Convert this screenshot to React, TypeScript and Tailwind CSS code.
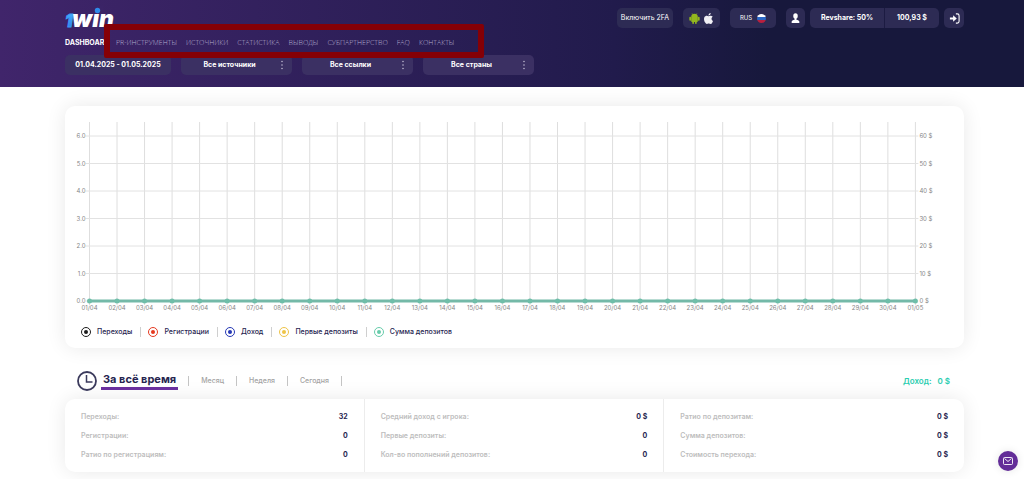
import { useState } from "react";

const font = "font-['Inter','Open_Sans',sans-serif]";

const navItems = [
  "PR-ИНСТРУМЕНТЫ",
  "ИСТОЧНИКИ",
  "СТАТИСТИКА",
  "ВЫВОДЫ",
  "СУБПАРТНЕРСТВО",
  "FAQ",
  "КОНТАКТЫ",
];

const filters = [
  { label: "Источники", value: "Все источники" },
  { label: "Ссылки", value: "Все ссылки" },
  { label: "Страны", value: "Все страны" },
];

const series = [
  { name: "Переходы", ring: "border-[#1c1c1c] text-[#1c1c1c]" },
  { name: "Регистрации", ring: "border-[#e5391f] text-[#e5391f]" },
  { name: "Доход", ring: "border-[#2437b4] text-[#2437b4]" },
  { name: "Первые депозиты", ring: "border-[#eec447] text-[#eec447]" },
  { name: "Сумма депозитов", ring: "border-[#67ccab] text-[#67ccab]" },
];

const periods = ["Месяц", "Неделя", "Сегодня"];

const stats = [
  [
    ["Переходы:", "32"],
    ["Регистрации:", "0"],
    ["Ратио по регистрациям:", "0"],
  ],
  [
    ["Средний доход с игрока:", "0 $"],
    ["Первые депозиты:", "0"],
    ["Кол-во пополнений депозитов:", "0"],
  ],
  [
    ["Ратио по депозитам:", "0 $"],
    ["Сумма депозитов:", "0 $"],
    ["Стоимость перехода:", "0 $"],
  ],
];

const days = Array.from({ length: 31 }, (_, i) =>
  i < 30 ? `${String(i + 1).padStart(2, "0")}/04` : "01/05",
);

const pill = "flex h-5 items-center justify-center rounded-[5px] bg-[#2d2b54]";

function Logo() {
  return (
    <svg viewBox="0 0 54 30" className="h-[30px] w-[54px]" role="img" aria-label="1win">
      <defs>
        <linearGradient id="one" x1="0" y1="0" x2="0" y2="1">
          <stop offset="0" stopColor="#45b4ff" />
          <stop offset="1" stopColor="#2a78e6" />
        </linearGradient>
      </defs>
      <g fontFamily="Inter, sans-serif" fontWeight="900" fontStyle="italic">
        <text x="0" y="24" fontSize="17" fill="url(#one)" stroke="#3a9df5" strokeWidth=".8">1</text>
        <text x="7" y="24" fontSize="23" fill="#fff">win</text>
      </g>
      <rect x="29" y="3" width="9" height="6.800" fill="#3b2467" />
      <circle cx="32.500" cy="7.500" r="2.700" fill="#2f8bea" />
    </svg>
  );
}

function AndroidIcon() {
  return (
    <svg viewBox="0 0 20 20" className="size-[11px]" fill="#93b81e" aria-hidden="true">
      <path d="M4 7.400a6 6 0 0 1 12 0z" />
      <path d="M4 7.200h12V15a1.500 1.500 0 0 1-1.500 1.500h-9A1.500 1.500 0 0 1 4 15z" />
      <rect x=".6" y="7" width="3.200" height="7" rx="1.500" />
      <rect x="16.200" y="7" width="3.200" height="7" rx="1.500" />
      <rect x="6" y="14" width="3" height="6" rx="1.500" />
      <rect x="11" y="14" width="3" height="6" rx="1.500" />
      <path d="M5.500.5 7 3M14.500.5 13 3" stroke="#93b81e" />
    </svg>
  );
}

function AppleIcon() {
  return (
    <svg viewBox="0 0 24 24" className="size-[11px]" fill="#f1f0f5" aria-hidden="true">
      <path d="M12.152 6.896c-.948 0-2.415-1.078-3.960-1.040-2.040.027-3.910 1.183-4.961 3.014-2.117 3.675-.546 9.103 1.519 12.090 1.013 1.454 2.208 3.090 3.792 3.039 1.520-.065 2.090-.987 3.935-.987 1.831 0 2.350.987 3.960.948 1.637-.026 2.676-1.480 3.676-2.948 1.156-1.688 1.636-3.325 1.662-3.415-.039-.013-3.182-1.221-3.220-4.857-.026-3.040 2.480-4.494 2.597-4.559-1.429-2.090-3.623-2.324-4.390-2.376-2-.156-3.675 1.090-4.610 1.090zM15.530 3.830c.843-1.012 1.400-2.427 1.245-3.830-1.207.052-2.662.805-3.532 1.818-.780.896-1.454 2.338-1.273 3.714 1.338.104 2.715-.688 3.559-1.701" />
    </svg>
  );
}

function FlagIcon() {
  return (
    <svg viewBox="0 0 9 9" className="size-[9px] rounded-full" aria-hidden="true">
      <rect width="9" height="3" fill="#fff" />
      <rect y="3" width="9" height="3" fill="#2a66c4" />
      <rect y="6" width="9" height="3" fill="#b8203f" />
    </svg>
  );
}

function UserIcon() {
  return (
    <svg viewBox="0 0 10 12" className="h-[10px] w-[9px]" fill="#fff" aria-hidden="true">
      <ellipse cx="5" cy="3.500" rx="2.700" ry="3.300" />
      <path d="M3.900 6h2.200v2.200c2 .3 3.500 1 3.500 2.300V12H.4v-1.500c0-1.300 1.500-2 3.500-2.300z" />
    </svg>
  );
}

function ExitIcon() {
  return (
    <svg viewBox="0 0 12 12" className="size-[11px]" aria-hidden="true">
      <path d="M7.500 1H9a2 2 0 0 1 2 2v6a2 2 0 0 1-2 2H7.500" fill="none" stroke="#fff" strokeWidth="1.200" />
      <path d="M1 5h3.500V2.500L8.500 6l-4 3.500V7H1z" fill="#fff" />
    </svg>
  );
}

function Chart() {
  const x0 = 24.5;
  const y0 = 181;
  const stepX = 27.53;
  const stepY = 27.5;
  const x1 = x0 + 30 * stepX;
  return (
    <svg viewBox="0 0 899 196" className="block h-auto w-full" role="img" aria-label="Статистика по дням" fontFamily="Inter, sans-serif" fontSize="6" fill="#858585">
      {days.map((d, i) => (
        <g key={d}>
          <line x1={x0 + i * stepX} x2={x0 + i * stepX} y1="2" y2={y0 + 4} stroke="#dedede" />
          <text x={x0 + i * stepX} y="190" textAnchor="middle">{d}</text>
        </g>
      ))}
      {[0, 1, 2, 3, 4, 5, 6].map((n) => (
        <g key={n}>
          <line x1={x0 - 4} x2={x1 + 3} y1={y0 - n * stepY} y2={y0 - n * stepY} stroke="#e2e2e2" />
          <text x={x0 - 4} y={y0 + 2 - n * stepY} textAnchor="end">{n}.0</text>
          <text x={x1 + 4} y={y0 + 2 - n * stepY}>{n * 10} $</text>
        </g>
      ))}
      <line x1={x0} x2={x1} y1={y0} y2={y0} stroke="#74b9a8" strokeWidth="3" />
      {days.map((d, i) => (
        <circle key={d} cx={x0 + i * stepX} cy={y0} r="2.500" fill="#6fbea9" />
      ))}
    </svg>
  );
}

export default function App() {
  const [period, setPeriod] = useState("За всё время");
  return (
    <div className={`${font} min-h-screen bg-white text-[#26244f]`}>
      <header className="bg-linear-to-r from-[#40256b] via-[#211b4c] via-60% to-[#17183c] to-75% pt-2 pr-[60px] pb-3 pl-[65px] text-white">
        <div className="flex h-5 items-center justify-between">
          <a href="#"><Logo /></a>
          <div className="flex text-[7px] leading-5">
            <button className={`${pill} w-14`}>Включить 2FA</button>
            <div className={`${pill} ml-[10px] w-[37px] gap-[3px]`}>
              <a href="#" aria-label="Android"><AndroidIcon /></a>
              <a href="#" aria-label="iOS"><AppleIcon /></a>
            </div>
            <button className={`${pill} ml-[10px] w-[46px] gap-[5px] text-[6px]`}>RUS <FlagIcon /></button>
            <button aria-label="Профиль" className={`${pill} ml-[10px] w-[19px]`}><UserIcon /></button>
            <div className={`${pill} ml-[5px] font-bold`}>
              <span className="w-[75px] border-r border-[#1c1b42] text-center">Revshare: 50%</span>
              <span className="w-[54px] text-center">100,93 $</span>
            </div>
            <button aria-label="Выйти" className={`${pill} ml-[5px] w-5`}><ExitIcon /></button>
          </div>
        </div>
        <nav className="relative mt-[10px] flex h-[10px] items-center text-[7px] whitespace-nowrap">
          <a href="#" className="w-[51px] font-bold">DASHBOARD</a>
          <div className="flex gap-[9px] font-['Open_Sans'] font-light text-[#b4adcf]">
            {navItems.map((item) => (
              <a key={item} href="#">{item}</a>
            ))}
          </div>
          <div className="pointer-events-none absolute -top-[14px] left-[39px] z-10 h-[34px] w-[380px] rounded-[2px] border-[6px] border-[#850006]" />
        </nav>
        <div className="mt-[7px] flex gap-[10px] text-[7px] font-bold">
          <button className="h-5 w-[106px] rounded-[5px] bg-[#3b3063]">01.04.2025 - 01.05.2025</button>
          {filters.map((f) => (
            <div key={f.label} className="relative h-5 w-[111px]">
              <select aria-label={f.label} className="h-5 w-full appearance-none rounded-[5px] bg-[#3b3063] pr-[14px] text-center">
                <option>{f.value}</option>
              </select>
              <svg viewBox="0 0 2 10" className="pointer-events-none absolute top-[5px] right-[9px] h-[10px] w-[2px]" fill="#d5d0e3" aria-hidden="true">
                <circle cx="1" cy="1.500" r=".7" />
                <circle cx="1" cy="5" r=".7" />
                <circle cx="1" cy="8.500" r=".7" />
              </svg>
            </div>
          ))}
        </div>
      </header>

      <main className="pt-[19px] pr-[60px] pb-[7px] pl-[65px]">
        <section className="rounded-[10px] bg-white pt-[14px] pb-[10px] shadow-[0_0_20px_rgba(0,0,0,0.09)]">
          <Chart />
          <div className="mt-[10px] flex h-3 items-center pl-4 text-[7px] leading-[10px] font-medium">
            {series.map((s, i) => (
              <label key={s.name} className={i ? "ml-2 flex items-center gap-[6px] border-l border-[#cfcfcf] pl-[7px]" : "flex items-center gap-[6px]"}>
                <input
                  type="checkbox"
                  defaultChecked
                  className={`${s.ring} grid size-[10px] appearance-none place-items-center rounded-full border before:size-1 before:rounded-full checked:before:bg-current`}
                />
                {s.name}
              </label>
            ))}
          </div>
        </section>

        <section className="mt-[22px]">
          <div className="flex h-[22px] items-center pr-[14px] pl-3">
            <svg viewBox="0 0 20 20" className="size-5" fill="none" stroke="#3b3a5c" aria-hidden="true">
              <circle cx="10" cy="10" r="9" strokeWidth="1.800" />
              <path d="M9.500 4v7H15.500" strokeWidth="1.500" />
            </svg>
            <button onClick={() => setPeriod("За всё время")} aria-pressed={period === "За всё время"} className="ml-1 border-b-3 border-[#6a2f9e] px-[2px] text-[11px] leading-[15px] font-bold">
              За всё время
            </button>
            <div className="ml-[10px] flex text-[7px] leading-[10px] font-medium text-[#a3a3a3]">
              {periods.map((p) => (
                <button key={p} onClick={() => setPeriod(p)} aria-pressed={period === p} className="border-l border-[#c4c4c4] px-3 last:border-r">{p}</button>
              ))}
            </div>
            <div className="ml-auto flex gap-[6px] text-[8px] font-semibold text-[#2bcdb0]"><span>Доход:</span><span>0 $</span></div>
          </div>
          <div className="mt-[7px] grid grid-cols-3 rounded-[10px] bg-white shadow-[0_0_20px_rgba(0,0,0,0.09)]">
            {stats.map((col, i) => (
              <dl key={i} className="border-r border-[#ececec] px-4 py-2 text-[7px] leading-[19px] font-semibold last:border-r-0">
                {col.map(([k, v]) => (
                  <div key={k} className="flex justify-between">
                    <dt className="text-[#bdbdbd]">{k}</dt>
                    <dd className="font-bold">{v}</dd>
                  </div>
                ))}
              </dl>
            ))}
          </div>
        </section>
      </main>

      <button aria-label="Сообщения" className="fixed right-[6px] bottom-2 grid size-5 place-items-center rounded-full bg-[#632d98] shadow-[0_0_8px_rgba(0,0,0,0.1)]">
        <svg viewBox="0 0 10 8" className="h-2 w-[10px]" fill="none" stroke="#fff" strokeWidth=".9" aria-hidden="true">
          <rect x=".5" y=".5" width="9" height="7" rx="1" />
          <path d="M1.500 1.500 5 4.500l3.500-3" />
        </svg>
      </button>
    </div>
  );
}
